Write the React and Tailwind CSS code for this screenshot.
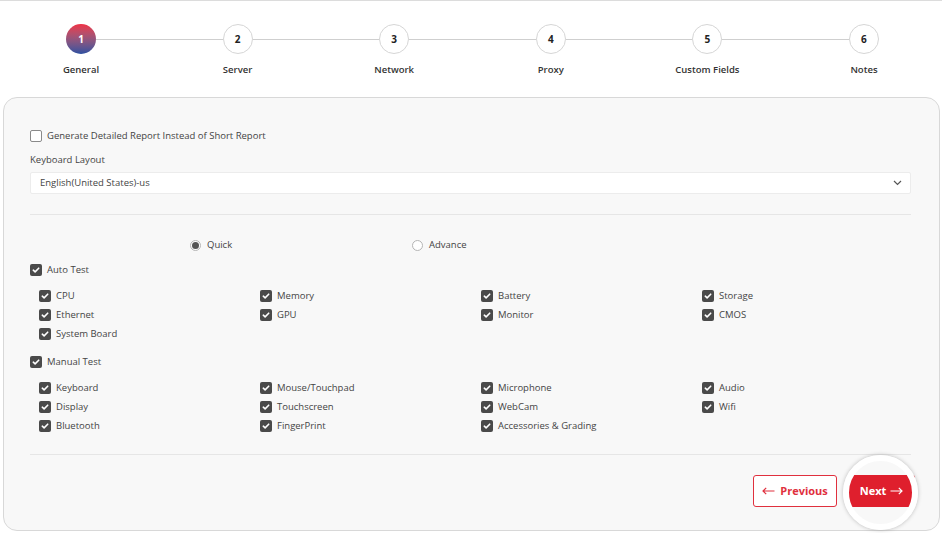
import React from 'react'

const steps = ['General', 'Server', 'Network', 'Proxy', 'Custom Fields', 'Notes']

const autoTests = ['CPU', 'Memory', 'Battery', 'Storage', 'Ethernet', 'GPU', 'Monitor', 'CMOS', 'System Board']
const manualTests = [
  'Keyboard', 'Mouse/Touchpad', 'Microphone', 'Audio',
  'Display', 'Touchscreen', 'WebCam', 'Wifi',
  'Bluetooth', 'FingerPrint', 'Accessories & Grading',
]

function Check({ checked = true }) {
  if (!checked) {
    return <span className="w-[12px] h-[12px] rounded-[2px] border border-[#8a8a8a] bg-white shrink-0" />
  }
  return (
    <span className="w-[12px] h-[12px] rounded-[2px] bg-[#4a4a4a] flex items-center justify-center shrink-0">
      <svg width="8" height="8" viewBox="0 0 8 8">
        <path d="M1.3 4.2 L3.1 5.9 L6.7 2.2" fill="none" stroke="white" strokeWidth="1.6" strokeLinecap="round" strokeLinejoin="round" />
      </svg>
    </span>
  )
}

function CheckItem({ label, checked = true }) {
  return (
    <div className="h-[14px] flex items-center gap-[5px]">
      <Check checked={checked} />
      <span className="text-[9.5px] text-[#444]">{label}</span>
    </div>
  )
}

function Radio({ label, on }) {
  return (
    <div className="h-[14px] flex items-center gap-[6px]">
      <span className="w-[11px] h-[11px] rounded-full border border-[#b5b5b5] bg-white flex items-center justify-center">
        {on && <span className="w-[7px] h-[7px] rounded-full bg-[#555]" />}
      </span>
      <span className="text-[9.5px] text-[#444]">{label}</span>
    </div>
  )
}

export default function App() {
  return (
    <div className="w-[942px] h-[533px] bg-white border-t border-[#dcdcdc] overflow-hidden relative" style={{ fontFamily: '"Open Sans", "Liberation Sans", sans-serif' }}>
      {/* stepper */}
      <div className="pt-[23px]">
        <div className="flex items-center pl-[66px] pr-[63px]">
          {steps.map((s, i) => (
            <React.Fragment key={s}>
              {i === 0 ? (
                <div className="w-[30px] h-[30px] rounded-full bg-gradient-to-b from-[#ef2f45] to-[#2b4fa0] flex items-center justify-center text-[10px] font-bold text-white shrink-0">1</div>
              ) : (
                <div className="w-[30px] h-[30px] rounded-full border border-[#d6d6d6] bg-white flex items-center justify-center text-[10px] font-bold text-[#222] shrink-0">{i + 1}</div>
              )}
              {i < steps.length - 1 && <div className="flex-1 h-px bg-[#cfcfcf]" />}
            </React.Fragment>
          ))}
        </div>
        <div className="flex justify-between pl-[31px] pr-[28px] mt-[9px]">
          {steps.map((s) => (
            <div key={s} className="w-[100px] text-center text-[9.5px] font-semibold text-[#333] leading-[14px]">{s}</div>
          ))}
        </div>
      </div>

      {/* card */}
      <div className="mx-[3px] mt-[20px] w-[937px] h-[434px] border border-[#d8d8d8] rounded-[14px] bg-[#f8f8f8] pl-[26px] pr-[28px] pt-[31px]">
        <CheckItem label="Generate Detailed Report Instead of Short Report" checked={false} />
        <div className="mt-[10px] h-[14px] flex items-center text-[9.5px] text-[#444]">Keyboard Layout</div>
        <div className="mt-[5px] h-[22px] bg-white border border-[#ececec] rounded-[2px] flex items-center justify-between pl-[9px] pr-[8px]">
          <span className="text-[9.5px] text-[#444]">English(United States)-us</span>
          <svg width="9" height="6" viewBox="0 0 9 6">
            <path d="M1 1 L4.5 4.5 L8 1" fill="none" stroke="#555" strokeWidth="1.2" />
          </svg>
        </div>
        <div className="mt-[20px] border-t border-[#e6e6e6]" />

        <div className="mt-[23px] flex">
          <div className="ml-[160px] w-[222px]"><Radio label="Quick" on /></div>
          <Radio label="Advance" />
        </div>

        <div className="mt-[11px]"><CheckItem label="Auto Test" /></div>
        <div className="mt-[12px] ml-[9px] grid grid-cols-[221px_221px_221px_1fr] gap-y-[5px]">
          {autoTests.map((t) => <CheckItem key={t} label={t} />)}
        </div>

        <div className="mt-[14px]"><CheckItem label="Manual Test" /></div>
        <div className="mt-[12px] ml-[9px] grid grid-cols-[221px_221px_221px_1fr] gap-y-[5px]">
          {manualTests.map((t) => <CheckItem key={t} label={t} />)}
        </div>

        <div className="mt-[21px] border-t border-[#e6e6e6]" />

        <div className="mt-[20px] flex justify-end gap-[11px] -mr-[4px]">
          <button className="h-[32px] w-[84px] border border-[#e0303e] rounded-[3px] bg-white text-[#e0303e] text-[11px] font-bold flex items-center justify-center gap-[5px]">
            <svg width="13" height="8" viewBox="0 0 13 8">
              <path d="M12.5 4 H1 M4.2 0.8 L1 4 L4.2 7.2" fill="none" stroke="#e0303e" strokeWidth="1.2" />
            </svg>
            Previous
          </button>
          <button className="h-[32px] w-[67px] rounded-[3px] bg-[#df1f2d] text-white text-[11px] font-bold flex items-center justify-center gap-[4px]">
            Next
            <svg width="13" height="8" viewBox="0 0 13 8">
              <path d="M0.5 4 H12 M8.8 0.8 L12 4 L8.8 7.2" fill="none" stroke="white" strokeWidth="1.2" />
            </svg>
          </button>
        </div>
      </div>

      {/* tap highlight ring */}
      <div className="absolute left-[843px] top-[454px] w-[75px] h-[75px] rounded-full border-[6px] border-white shadow-[0_0_4px_rgba(0,0,0,0.25)] pointer-events-none" />
    </div>
  )
}
